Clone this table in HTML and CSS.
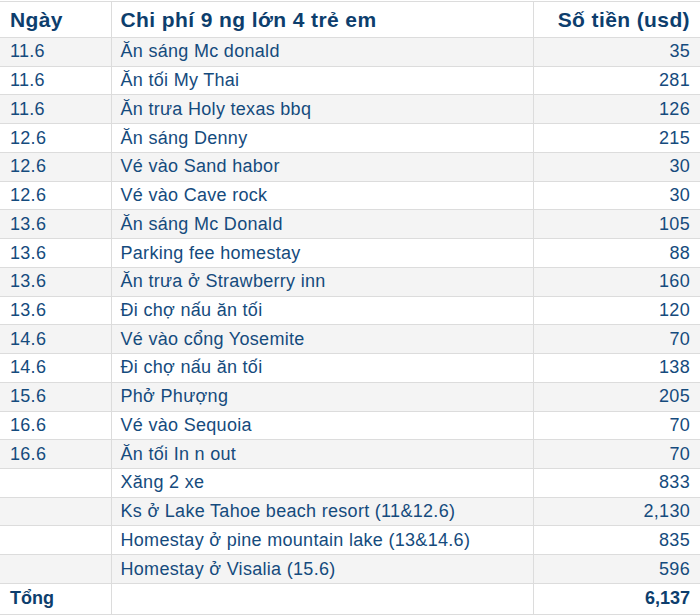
FILE: index.html
```html
<!DOCTYPE html>
<html lang="vi">
<head>
<meta charset="utf-8">
<link rel="stylesheet" href="styles.css">
</head>
<body>
<table class="sheet">
  <colgroup>
    <col class="c-date">
    <col class="c-desc">
    <col class="c-amt">
  </colgroup>
  <thead>
    <tr class="head">
      <th>Ngày</th>
      <th>Chi phí 9 ng lớn 4 trẻ em</th>
      <th class="num">Số tiền (usd)</th>
    </tr>
  </thead>
  <tbody>
    <tr><td>11.6</td><td>Ăn sáng Mc donald</td><td class="num">35</td></tr>
    <tr><td>11.6</td><td>Ăn tối My Thai</td><td class="num">281</td></tr>
    <tr><td>11.6</td><td>Ăn trưa Holy texas bbq</td><td class="num">126</td></tr>
    <tr><td>12.6</td><td>Ăn sáng Denny</td><td class="num">215</td></tr>
    <tr><td>12.6</td><td>Vé vào Sand habor</td><td class="num">30</td></tr>
    <tr><td>12.6</td><td>Vé vào Cave rock</td><td class="num">30</td></tr>
    <tr><td>13.6</td><td>Ăn sáng Mc Donald</td><td class="num">105</td></tr>
    <tr><td>13.6</td><td>Parking fee homestay</td><td class="num">88</td></tr>
    <tr><td>13.6</td><td>Ăn trưa ở Strawberry inn</td><td class="num">160</td></tr>
    <tr><td>13.6</td><td>Đi chợ nấu ăn tối</td><td class="num">120</td></tr>
    <tr><td>14.6</td><td>Vé vào cổng Yosemite</td><td class="num">70</td></tr>
    <tr><td>14.6</td><td>Đi chợ nấu ăn tối</td><td class="num">138</td></tr>
    <tr><td>15.6</td><td>Phở Phượng</td><td class="num">205</td></tr>
    <tr><td>16.6</td><td>Vé vào Sequoia</td><td class="num">70</td></tr>
    <tr><td>16.6</td><td>Ăn tối In n out</td><td class="num">70</td></tr>
    <tr><td></td><td>Xăng 2 xe</td><td class="num">833</td></tr>
    <tr><td></td><td>Ks ở Lake Tahoe beach resort (11&amp;12.6)</td><td class="num">2,130</td></tr>
    <tr><td></td><td>Homestay ở pine mountain lake (13&amp;14.6)</td><td class="num">835</td></tr>
    <tr><td></td><td>Homestay ở Visalia (15.6)</td><td class="num">596</td></tr>
  </tbody>
  <tfoot>
    <tr class="total">
      <td>Tổng</td><td></td><td class="num">6,137</td>
    </tr>
  </tfoot>
</table>
</body>
</html>
```

FILE: styles.css
```css
html, body {
  margin: 0;
  padding: 0;
  background: #ffffff;
}

body {
  padding-top: 1px;
  font-family: "Liberation Sans", Arial, sans-serif;
}

.sheet {
  width: 700px;
  border-collapse: collapse;
  table-layout: fixed;
  color: #154b7d;
}

.c-date { width: 111px; }
.c-desc { width: 422px; }
.c-amt { width: 167px; }

.sheet th,
.sheet td {
  border: 1px solid #dcdcdc;
  padding: 0 10px 0 9px;
  text-align: left;
  vertical-align: middle;
  white-space: nowrap;
  overflow: hidden;
}

.sheet th:first-child,
.sheet td:first-child {
  border-left: none;
  padding-left: 10px;
}

.sheet th:last-child,
.sheet td:last-child {
  border-right: none;
}

.sheet .num {
  text-align: right;
}

.head th {
  height: 35px;
  font-size: 21px;
  letter-spacing: 0.4px;
  font-weight: bold;
  color: #0d3e6d;
}

.sheet tbody td {
  height: 27.74px;
  font-size: 18px;
  letter-spacing: 0.3px;
}

.sheet tbody tr:nth-child(odd) td {
  background: #f4f4f4;
}

.total td {
  height: 30px;
  font-size: 18px;
  font-weight: bold;
  color: #0d3e6d;
}
```
